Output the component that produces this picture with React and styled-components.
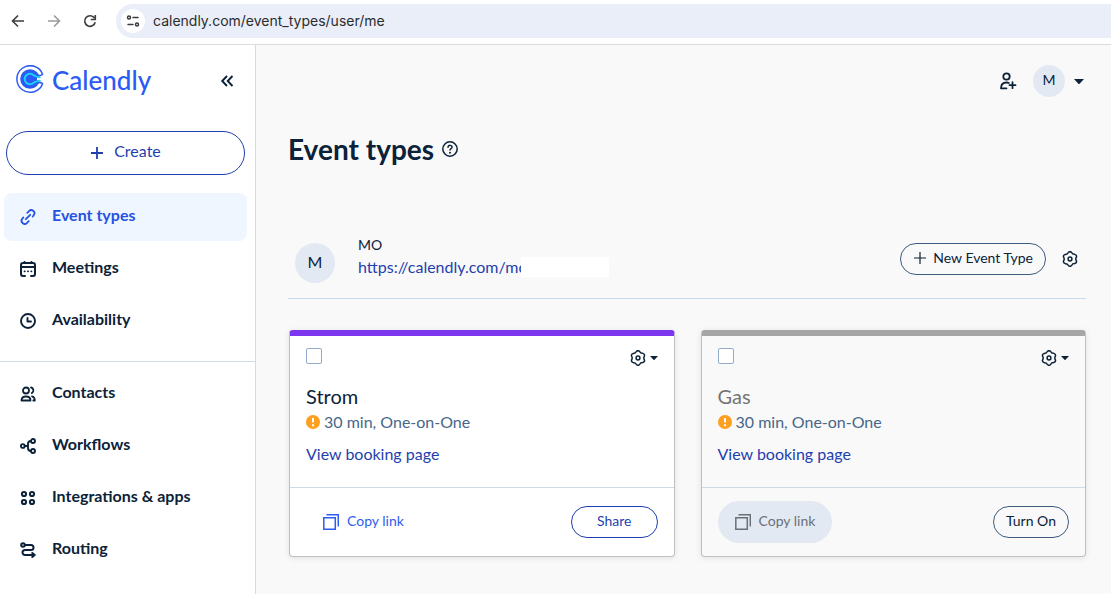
import React from "react";
import styled, { createGlobalStyle, css } from "styled-components";

const navy = "#0b2239";
const blue = "#1f3fae";

const GlobalStyle = createGlobalStyle`
  *, *::before, *::after { box-sizing: border-box; }
  html, body, #root { height: 100%; }
  body {
    margin: 0;
    background: #f9f9f9;
    color: ${navy};
    font-family: Lato, "Open Sans", sans-serif;
    font-size: 16px;
    line-height: 24px;
  }
  button { font: inherit; color: inherit; cursor: pointer; }
  a { text-decoration: none; }
  svg { display: block; flex: none; }
`;

const Page = styled.div`
  display: flex;
  flex-direction: column;
  min-height: 100%;
`;

const IconButton = styled.button`
  display: flex;
  align-items: center;
  justify-content: center;
  gap: ${({ $gap }) => $gap || 0}px;
  padding: 0;
  border: 0;
  background: none;
  color: ${({ $muted }) => ($muted ? "#9a9b9c" : "inherit")};
`;

/* Browser toolbar */
const BrowserBar = styled.header`
  display: flex;
  align-items: center;
  height: 45px;
  padding: 0 0 3px 10px;
  gap: 20px;
  background: #fff;
  border-bottom: 1px solid #dadbdc;
  color: #3c3d3f;
`;

const AddressBar = styled.div`
  display: flex;
  flex: 1;
  align-items: center;
  gap: 8px;
  height: 34px;
  margin-left: -2px;
  padding-left: 5px;
  border-radius: 17px 0 0 17px;
  background: #e9eef8;
`;

const SiteInfo = styled(IconButton)`
  width: 24px;
  height: 24px;
  border-radius: 50%;
  background: #fff;
`;

const AddressInput = styled.input`
  flex: 1;
  min-width: 0;
  padding: 0;
  border: 0;
  outline: 0;
  background: none;
  color: #2b2c2e;
  font: 14px/20px Inter, Roboto, sans-serif;
`;

/* Sidebar */
const Body = styled.div`
  display: flex;
  flex: 1;
`;

const Sidebar = styled.aside`
  flex: none;
  width: 256px;
  border-right: 1px solid #cfdcec;
  background: #fff;
`;

const SidebarTop = styled.div`
  display: flex;
  align-items: center;
  justify-content: space-between;
  height: 72px;
  padding: 0 20px 0 16px;
`;

const Brand = styled.a`
  display: flex;
  align-items: center;
  gap: 8px;
  padding-bottom: 2px;
  color: #2a5bf5;
  font-size: 26px;
  line-height: 32px;
  font-weight: 500;
`;

const CreateButton = styled.button`
  display: flex;
  align-items: center;
  justify-content: center;
  gap: 10px;
  width: calc(100% - 16px);
  height: 44px;
  margin: 14px 10px 18px 6px;
  padding: 0;
  border: 1px solid ${blue};
  border-radius: 22px;
  background: #fff;
  color: ${blue};
`;

const NavGroup = styled.nav`
  display: flex;
  flex-direction: column;
  gap: 4px;
  padding: 0 8px 0 4px;
  & + & {
    margin-top: 16px;
    padding-top: 8px;
    border-top: 1px solid #cfdcec;
  }
`;

const NavItem = styled.a`
  display: flex;
  align-items: center;
  gap: 16px;
  height: 48px;
  padding: 0 16px;
  border-radius: 8px;
  background: ${({ $active }) => ($active ? "#eff6ff" : "transparent")};
  color: ${({ $active }) => ($active ? "#2552e0" : navy)};
  font-weight: 700;
`;

const Label = styled.span`
  padding-bottom: ${({ $lift }) => $lift || 4}px;
`;

/* Main column */
const Main = styled.main`
  flex: 1;
  min-width: 0;
  padding: 20px 25px 32px 32px;
`;

const AccountBar = styled.div`
  display: flex;
  align-items: center;
  justify-content: flex-end;
  gap: 16px;
  padding-right: 2px;
`;

const Avatar = styled.span`
  display: flex;
  flex: none;
  align-items: center;
  justify-content: center;
  width: ${({ $size }) => $size}px;
  height: ${({ $size }) => $size}px;
  padding-bottom: 2px;
  border-radius: 50%;
  background: #e3e9f3;
  font-size: ${({ $size }) => ($size > 32 ? 16 : 14)}px;
`;

const TitleRow = styled.div`
  display: flex;
  align-items: center;
  gap: 8px;
  height: 40px;
  margin-top: 32px;
`;

const Title = styled.h1`
  margin: 0;
  font-size: 28px;
  line-height: 36px;
  font-weight: 700;
`;

const ProfileRow = styled.section`
  display: flex;
  align-items: flex-start;
  gap: 23px;
  margin-top: 64px;
  padding: 0 8px 15px 7px;
  border-bottom: 1px solid #c9dbee;
  & > ${Avatar} { margin-top: 10px; }
`;

const ProfileText = styled.div`
  display: flex;
  flex: 1;
  flex-direction: column;
  align-items: flex-start;
`;

const ProfileName = styled.span`
  font-size: 14px;
  line-height: 24px;
`;

const ProfileUrl = styled.div`
  display: flex;
  height: 20px;
`;

const UrlLink = styled.a`
  color: ${blue};
  line-height: 20px;
  white-space: nowrap;
`;

const Redaction = styled.span`
  position: relative;
  width: 88px;
  margin-left: -7px;
  background: #fff;
`;

const ProfileActions = styled.div`
  display: flex;
  align-items: center;
  gap: 16px;
  margin-top: 10px;
`;

const PillButton = styled.button`
  display: flex;
  align-items: center;
  justify-content: center;
  gap: 6px;
  height: 32px;
  padding: 0 ${({ $pad }) => $pad || 12}px 2px;
  border: 1px solid ${({ $tone }) => ($tone === "blue" ? blue : "#3d5b80")};
  border-radius: 16px;
  background: transparent;
  color: ${({ $tone }) => ($tone === "blue" ? blue : navy)};
  font-size: 14px;
  line-height: 20px;
`;

const Cards = styled.section`
  display: grid;
  grid-template-columns: 1fr 1fr;
  gap: 26px;
  margin-top: 31px;
  padding-left: 1px;
`;

const Card = styled.article`
  border: 1px solid #bfc0c2;
  border-top: 6px solid ${({ $color }) => $color};
  border-radius: 4px;
  background: ${({ $off }) => ($off ? "#f9f9f9" : "#fff")};
  box-shadow: 0 1px 6px rgba(0, 0, 0, 0.1);
`;

const CardBody = styled.div`
  padding: 12px 16px 21px;
`;

const CardTools = styled.div`
  display: flex;
  align-items: flex-start;
  justify-content: space-between;
  height: 36px;
  & > button { margin-top: 2px; }
`;

const Checkbox = styled.input.attrs({ type: "checkbox" })`
  appearance: none;
  width: 16px;
  height: 16px;
  margin: 0;
  border: 1px solid #93abca;
  border-radius: 2px;
  background: #fff;
  &:checked { background: ${blue}; }
`;

const CardTitle = styled.h2`
  margin: 0;
  color: ${({ $off }) => ($off ? "#747474" : navy)};
  font-size: 20px;
  line-height: 24px;
  font-weight: 400;
`;

const Meta = styled.p`
  display: flex;
  align-items: center;
  gap: 4px;
  margin: 2px 0 0;
  color: #476788;
`;

const BookingLink = styled.a`
  display: block;
  margin-top: 8px;
  color: ${blue};
`;

const CardFooter = styled.footer`
  display: flex;
  align-items: center;
  justify-content: space-between;
  height: 69px;
  padding: 0 16px;
  border-top: 1px solid #cfdbe3;
`;

const CopyButton = styled.button`
  display: flex;
  align-items: center;
  gap: 8px;
  height: 42px;
  padding: 0 17px;
  border: 0;
  border-radius: 21px;
  background: transparent;
  color: #2f5cf0;
  font-size: 14px;
  ${({ disabled }) => disabled && css`
    background: #e3e9f3;
    color: #6b7077;
  `}
`;

/* Icons */
const Svg = ({ size = 16, box = 16, sw = 1.6, children, ...rest }) => (
  <svg width={size} height={size} viewBox={`0 0 ${box} ${box}`} fill="none" stroke="currentColor"
    strokeWidth={sw} strokeLinecap="round" strokeLinejoin="round" aria-hidden="true" {...rest}>
    {children}
  </svg>
);

const BackIcon = () => <Svg strokeLinecap="butt" strokeLinejoin="miter"><path d="M14 8H3M8 2.5 2.5 8 8 13.5" /></Svg>;
const ForwardIcon = () => <Svg strokeLinecap="butt" strokeLinejoin="miter"><path d="M2 8h11M8 2.5 13.5 8 8 13.5" /></Svg>;
const ReloadIcon = () => (
  <Svg strokeLinecap="butt" strokeLinejoin="miter">
    <path d="M13.2 9.2A5.3 5.3 0 1 1 12.4 5M13.3 2v4.500H8.800" />
  </Svg>
);
const TuneIcon = () => (
  <Svg sw={1.5}><circle cx="4" cy="4.5" r="1.5" /><path d="M8 4.5h5M3 11.5h5" /><circle cx="12" cy="11.5" r="1.5" /></Svg>
);
const LogoMark = () => (
  <svg width="28" height="30" viewBox="0 0 28 30" fill="none" aria-hidden="true">
    <path d="M26.800 9.800A13.300 13.300 0 1 0 26.800 18.200" stroke="#2a5bf5" strokeWidth="1.500" />
    <circle cx="14" cy="14" r="9.800" fill="#2a5bf5" />
    <path d="M21 12.500h7v3h-7z" fill="#fff" />
    <path d="M21.500 10.600c1.800.2 3.600-.2 5-1M21.500 17.400c1.800-.2 3.600.2 5 1" stroke="#2a5bf5" strokeWidth="1.600" />
    <path d="M24.500 12.100c-3.500.4-5-.2-6.700-1.800a5.300 5.300 0 1 0 0 7.400c1.700-1.600 3.200-2.200 6.700-1.800" stroke="#19d3f3" strokeWidth="1.900" />
    <path d="M18.500 12.300h2.500v3.400h-2.500z" fill="#2a5bf5" />
  </svg>
);
const CollapseIcon = () => <Svg sw={1.9} strokeLinecap="butt" strokeLinejoin="miter"><path d="M8 3 3.2 8 8 13M13.5 3 8.7 8l4.8 5" /></Svg>;
const PlusIcon = ({ sw = 1.8 }) => <Svg size={14} box={14} sw={sw} strokeLinecap="butt"><path d="M7 1v12M1 7h12" /></Svg>;
const LinkIcon = () => (
  <Svg sw={1.8}>
    <path d="M5.8 10.200l4.400-4.400M7.300 3.800l1.500-1.500a3.100 3.100 0 0 1 4.900 3.900M13.700 6.200l-1 1.300M8.700 12.200l-1.500 1.500a3.100 3.100 0 0 1-4.900-3.900l1-1.300" />
  </Svg>
);
const CalendarIcon = () => (
  <Svg sw={2}>
    <path d="M5 15H3a2 2 0 0 1-2-2V4a2 2 0 0 1 2-2h10a2 2 0 0 1 2 2v9a2 2 0 0 1-2 2h-2M1 6h14M4.500 1v1M11.500 1v1" />
    <path d="M4.500 10.300h.3M7.900 10.300h.3M11.200 10.300h.3" strokeWidth="1.700" />
  </Svg>
);
const ClockIcon = () => <Svg sw={1.9}><circle cx="8" cy="8" r="7" /><path d="M7.500 5v3.500H11" /></Svg>;
const PeopleIcon = () => (
  <Svg sw={1.800}>
    <circle cx="6" cy="4.500" r="3" />
    <path d="M1.500 14.500c0-3 1.700-4 4.500-4s4.500 1 4.500 4zM11 1.500a3 3 0 0 1 .8 5.600M12 10.300c1.800.4 2.800 1.700 2.800 4.200h-1.500" />
  </Svg>
);
const WorkflowIcon = () => (
  <Svg sw={1.900}>
    <circle cx="2.800" cy="8" r="1.900" /><circle cx="13" cy="3" r="2" /><circle cx="13" cy="13" r="2" />
    <path d="M4.800 8H8M11 3C8.500 3 8 4.500 8 6v4c0 1.500.5 3 3 3" />
  </Svg>
);
const GridIcon = () => (
  <Svg sw={2}>
    <circle cx="4" cy="4" r="2.100" /><circle cx="12" cy="4" r="2.100" /><circle cx="4" cy="12" r="2.100" /><circle cx="12" cy="12" r="2.100" />
  </Svg>
);
const RoutingIcon = () => (
  <Svg sw={2}>
    <circle cx="3" cy="3" r="1.800" />
    <path d="M5 3h6a2.500 2.500 0 0 1 0 5H5a2.500 2.500 0 0 0 0 5h9M12.300 11l2.400 2-2.400 2" />
  </Svg>
);
const InviteIcon = () => (
  <Svg size={18} box={18} sw={1.800}>
    <circle cx="7.500" cy="4.500" r="3.200" />
    <path d="M7.500 16.300H2c0-4 2-5.800 5.500-5.800 1 0 1.700.2 2.300.5M13.500 10.200v6M10.500 13.200h6" />
  </Svg>
);
const HelpIcon = () => (
  <Svg sw={1.5}>
    <circle cx="8" cy="8" r="7.200" /><path d="M6 6.300c0-2.700 4.100-2.400 4.100-.1 0 1.500-2.100 1.400-2.100 2.800" /><path d="M8 11.700v.1" strokeWidth="2" />
  </Svg>
);

/* Six rounded teeth joined by concave curves */
const gearPath = () => {
  const at = (x, y, turn) => {
    const a = (turn * Math.PI) / 3;
    return `${(8 + x * Math.cos(a) - y * Math.sin(a)).toFixed(2)} ${(8 + x * Math.sin(a) + y * Math.cos(a)).toFixed(2)}`;
  };
  let d = `M${at(-1.6, -6.5, 0)}`;
  for (let i = 0; i < 6; i += 1) {
    d += `Q${at(0, -8.1, i)} ${at(1.6, -6.5, i)}Q${at(2.5, -4.5, i)} ${at(-1.6, -6.5, i + 1)}`;
  }
  return `${d}Z`;
};
const GearIcon = () => <Svg sw={1.5}><path d={gearPath()} /><circle cx="8" cy="8" r="1.900" /></Svg>;

const Caret = ({ size }) => (
  <svg width={size} height={size / 2} viewBox="0 0 10 5" fill="currentColor" aria-hidden="true"><path d="M0 0h10L5.600 4.700a.9.900 0 0 1-1.200 0z" /></svg>
);
const WarningIcon = () => (
  <svg width="14" height="14" viewBox="0 0 14 14" aria-hidden="true">
    <circle cx="7" cy="7" r="7" fill="#ff9f1f" />
    <path d="M7 3v4.500M7 9.300v1.900" stroke="#fff" strokeWidth="2" />
  </svg>
);
const CopyIcon = () => (
  <Svg sw={1.500} strokeLinejoin="miter" strokeLinecap="butt"><path d="M.8 3.800h11.500v11.500H.8zM3.500.8h11.800v11.700" /></Svg>
);

const primaryNav = [
  { label: "Event types", Icon: LinkIcon, active: true },
  { label: "Meetings", Icon: CalendarIcon },
  { label: "Availability", Icon: ClockIcon },
];
const secondaryNav = [
  { label: "Contacts", Icon: PeopleIcon },
  { label: "Workflows", Icon: WorkflowIcon },
  { label: "Integrations & apps", Icon: GridIcon },
  { label: "Routing", Icon: RoutingIcon },
];

const NavList = ({ items, label }) => (
  <NavGroup aria-label={label}>
    {items.map(({ label: text, Icon, active }) => (
      <NavItem key={text} href="#" $active={active} aria-current={active ? "page" : undefined}>
        <Icon />
        <Label>{text}</Label>
      </NavItem>
    ))}
  </NavGroup>
);

const EventCard = ({ name, color, off }) => (
  <Card $color={color} $off={off}>
    <CardBody>
      <CardTools>
        <Checkbox aria-label={`Select ${name}`} />
        <IconButton $gap={4} aria-label={`${name} settings`}>
          <GearIcon />
          <Caret size={8} />
        </IconButton>
      </CardTools>
      <CardTitle $off={off}>{name}</CardTitle>
      <Meta><WarningIcon />30 min, One-on-One</Meta>
      <BookingLink href="#">View booking page</BookingLink>
    </CardBody>
    <CardFooter>
      <CopyButton disabled={off}><CopyIcon /><Label $lift={2}>Copy link</Label></CopyButton>
      {off ? <PillButton>Turn On</PillButton> : <PillButton $tone="blue" $pad={25}>Share</PillButton>}
    </CardFooter>
  </Card>
);

export default function App() {
  return (
    <>
      <GlobalStyle />
      <Page>
        <BrowserBar>
          <IconButton aria-label="Back"><BackIcon /></IconButton>
          <IconButton aria-label="Forward" $muted><ForwardIcon /></IconButton>
          <IconButton aria-label="Reload"><ReloadIcon /></IconButton>
          <AddressBar>
            <SiteInfo aria-label="Site information"><TuneIcon /></SiteInfo>
            <AddressInput aria-label="Address" defaultValue="calendly.com/event_types/user/me" />
          </AddressBar>
        </BrowserBar>
        <Body>
          <Sidebar>
            <SidebarTop>
              <Brand href="#"><LogoMark />Calendly</Brand>
              <IconButton aria-label="Collapse menu"><CollapseIcon /></IconButton>
            </SidebarTop>
            <CreateButton><PlusIcon /><Label>Create</Label></CreateButton>
            <NavList items={primaryNav} label="Scheduling" />
            <NavList items={secondaryNav} label="Tools" />
          </Sidebar>
          <Main>
            <AccountBar>
              <IconButton aria-label="Invite user"><InviteIcon /></IconButton>
              <IconButton aria-label="Account" $gap={9}>
                <Avatar $size={32}>M</Avatar>
                <Caret size={10} />
              </IconButton>
            </AccountBar>
            <TitleRow>
              <Title>Event types</Title>
              <IconButton aria-label="Help"><HelpIcon /></IconButton>
            </TitleRow>
            <ProfileRow>
              <Avatar $size={40}>M</Avatar>
              <ProfileText>
                <ProfileName>MO</ProfileName>
                <ProfileUrl>
                  <UrlLink href="#">https://calendly.com/mo</UrlLink>
                  <Redaction />
                </ProfileUrl>
              </ProfileText>
              <ProfileActions>
                <PillButton><PlusIcon sw={1.2} />New Event Type</PillButton>
                <IconButton aria-label="Settings"><GearIcon /></IconButton>
              </ProfileActions>
            </ProfileRow>
            <Cards>
              <EventCard name="Strom" color="#7c36ee" />
              <EventCard name="Gas" color="#a6a6a6" off />
            </Cards>
          </Main>
        </Body>
      </Page>
    </>
  );
}
